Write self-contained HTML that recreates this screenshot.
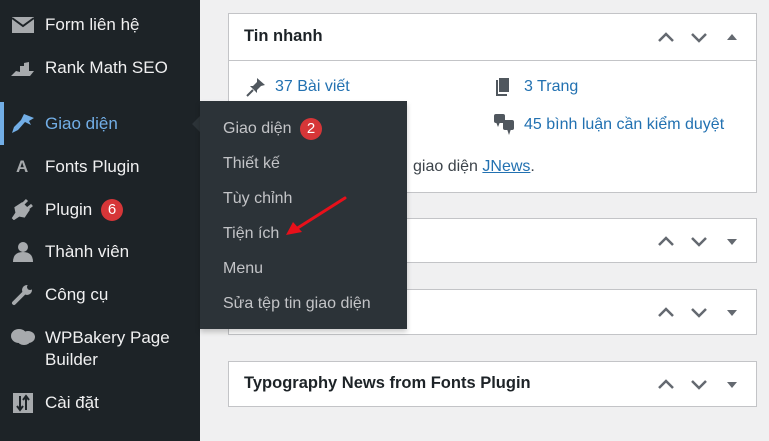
<!DOCTYPE html>
<html><head><meta charset="utf-8"><style>
*{margin:0;padding:0;box-sizing:border-box}
body{width:769px;height:441px;overflow:hidden;background:#f0f0f1;font-family:"Liberation Sans",sans-serif;position:relative}
.sb{position:absolute;left:0;top:0;width:200px;height:441px;background:#1d2327}
.it{position:absolute;left:45px;color:#f0f0f1;font-size:17px;line-height:20px;white-space:nowrap}
.ic{position:absolute;left:10px;width:26px;height:22px}
.bar{position:absolute;left:0;top:102px;width:4px;height:43px;background:#72aee6}
.badge{position:absolute;width:22px;height:22px;border-radius:11px;background:#d63638;color:#fff;font-size:15px;line-height:22px;text-align:center}
.fly{position:absolute;left:200px;top:101px;width:207px;height:228px;background:#2c3338;box-shadow:0 3px 5px rgba(0,0,0,.2)}
.fi{position:absolute;left:23px;color:#c3c4c7;font-size:16px;line-height:20px;white-space:nowrap}
.tip{position:absolute;left:192px;top:116px;width:0;height:0;border-top:8px solid transparent;border-bottom:8px solid transparent;border-right:8px solid #2c3338}
.box{position:absolute;left:228px;width:529px;background:#fff;border:1px solid #c3c4c7}
.ttl{position:absolute;left:15px;font-size:16.5px;font-weight:bold;color:#1d2327;white-space:nowrap}
.ctl{position:absolute;right:8px;width:90px;height:14px}
.lk{position:absolute;color:#2271b1;font-size:16px;line-height:20px;white-space:nowrap}
</style></head><body>
<div class="sb">
 <svg class="ic" style="top:14px" viewBox="0 0 26 22"><rect x="2" y="3" width="22" height="16" fill="#a7aaad"/><path d="M2 4 L13 12 L24 4" stroke="#1d2327" stroke-width="2" fill="none"/></svg>
 <div class="it" style="top:15px">Form liên hệ</div>
 <svg class="ic" style="top:58px" viewBox="0 0 26 22"><path d="M1 18 L6 13 L10 14 L10 8 L14 8 L14 5 L19 4 L19 13 L24 13 L20 18 Z" fill="#a7aaad"/></svg>
 <div class="it" style="top:58px">Rank Math SEO</div>
 <div class="bar"></div>
 <svg class="ic" style="top:112px" viewBox="0 0 26 22"><path d="M14 2 L24 6 L19 9 L21 13 L15 10 L8 18 L2 21 L4 15 L11 8 Z" fill="#72aee6"/></svg>
 <div class="it" style="top:114px;color:#72aee6">Giao diện</div>
 <div class="it" style="top:157px;left:16px;color:#a7aaad;font-weight:bold">A</div>
 <div class="it" style="top:157px">Fonts Plugin</div>
 <svg class="ic" style="top:198px" viewBox="0 0 26 22"><path d="M3 21 L7 15 L6 10 L12 6 L18 12 L14 18 L9 17 Z M12 7 L17 2 M17 11 L22 7" stroke="#a7aaad" stroke-width="3" fill="#a7aaad"/></svg>
 <div class="it" style="top:200px">Plugin</div>
 <div class="badge" style="left:101px;top:199px">6</div>
 <svg class="ic" style="top:240px" viewBox="0 0 26 22"><circle cx="13" cy="7" r="5" fill="#a7aaad"/><path d="M3 22 Q3 12 13 12 Q23 12 23 22 Z" fill="#a7aaad"/></svg>
 <div class="it" style="top:242px">Thành viên</div>
 <svg class="ic" style="top:284px" viewBox="0 0 26 22"><path d="M4 19 L14 9" stroke="#a7aaad" stroke-width="4" stroke-linecap="round"/><circle cx="17" cy="6" r="5" fill="#a7aaad"/><circle cx="20" cy="3" r="3" fill="#1d2327"/></svg>
 <div class="it" style="top:285px">Công cụ</div>
 <svg class="ic" style="top:326px" viewBox="0 0 26 22"><ellipse cx="9" cy="10" rx="8" ry="7" fill="#a7aaad"/><ellipse cx="18" cy="11" rx="7" ry="6" fill="#a7aaad"/><ellipse cx="14" cy="15" rx="6" ry="4" fill="#a7aaad"/></svg>
 <div class="it" style="top:328px">WPBakery Page<br><span style="line-height:23px">Builder</span></div>
 <svg class="ic" style="top:392px" viewBox="0 0 26 22"><rect x="3" y="1" width="20" height="20" fill="#a7aaad"/><path d="M10 4 V18 M7 14 L10 18 L13 14 M16 18 V4 M13 8 L16 4 L19 8" stroke="#1d2327" stroke-width="2" fill="none"/></svg>
 <div class="it" style="top:393px">Cài đặt</div>
</div>

<div class="box" style="top:13px;height:180px">
 <div class="ttl" style="top:13px">Tin nhanh</div>
 <svg class="ctl" style="top:16px" viewBox="0 0 90 14"><path d="M1 11 L8 4 L15 11" stroke="#646970" stroke-width="2.5" fill="none"/><path d="M34 4 L41 11 L48 4" stroke="#646970" stroke-width="2.5" fill="none"/><path d="M69 10 L74 4 L79 10 Z" fill="#646970"/></svg>
 <div style="position:absolute;left:0;top:46px;width:527px;border-top:1px solid #c3c4c7"></div>
 <svg style="position:absolute;left:16px;top:62px" width="22" height="22" viewBox="0 0 22 22"><path d="M12 2 L20 9 L16 10 L12 14 L12 17 L5 10 L8 10 L12 6 Z" fill="#50575e"/><path d="M8 14 L2 20" stroke="#50575e" stroke-width="2"/></svg>
 <div class="lk" style="left:46px;top:63px">37 Bài viết</div>
 <svg style="position:absolute;left:265px;top:62px" width="18" height="22" viewBox="0 0 18 22"><rect x="5" y="2" width="10" height="14" fill="#50575e"/><path d="M3 4 V19 H13" stroke="#50575e" stroke-width="2" fill="none"/></svg>
 <div class="lk" style="left:295px;top:63px">3 Trang</div>
 <svg style="position:absolute;left:264px;top:99px" width="24" height="24" viewBox="0 0 24 24"><rect x="1" y="1" width="11" height="9" rx="2" fill="#50575e"/><path d="M3 9 L5 14 L7 9Z" fill="#50575e"/><rect x="10" y="7" width="11" height="10" rx="2" fill="#50575e"/><path d="M14 16 L16 22 L18 16Z" fill="#50575e"/></svg>
 <div class="lk" style="left:295px;top:101px">45 bình luận cần kiểm duyệt</div>
 <div class="lk" style="left:184px;top:143px;color:#3c434a">giao diện <span style="color:#2271b1;text-decoration:underline">JNews</span>.</div>
</div>

<div class="box" style="top:218px;height:45px">
 <svg class="ctl" style="top:15px" viewBox="0 0 90 14"><path d="M1 11 L8 4 L15 11" stroke="#646970" stroke-width="2.5" fill="none"/><path d="M34 4 L41 11 L48 4" stroke="#646970" stroke-width="2.5" fill="none"/><path d="M69 5 L74 11 L79 5 Z" fill="#646970"/></svg>
</div>
<div class="box" style="top:289px;height:46px">
 <svg class="ctl" style="top:15px" viewBox="0 0 90 14"><path d="M1 11 L8 4 L15 11" stroke="#646970" stroke-width="2.5" fill="none"/><path d="M34 4 L41 11 L48 4" stroke="#646970" stroke-width="2.5" fill="none"/><path d="M69 5 L74 11 L79 5 Z" fill="#646970"/></svg>
</div>
<div class="box" style="top:361px;height:46px">
 <div class="ttl" style="top:12px">Typography News from Fonts Plugin</div>
 <svg class="ctl" style="top:15px" viewBox="0 0 90 14"><path d="M1 11 L8 4 L15 11" stroke="#646970" stroke-width="2.5" fill="none"/><path d="M34 4 L41 11 L48 4" stroke="#646970" stroke-width="2.5" fill="none"/><path d="M69 5 L74 11 L79 5 Z" fill="#646970"/></svg>
</div>

<div class="tip"></div>
<div class="fly">
 <div class="fi" style="top:18px">Giao diện</div>
 <div class="badge" style="left:100px;top:17px">2</div>
 <div class="fi" style="top:53px">Thiết kế</div>
 <div class="fi" style="top:88px">Tùy chỉnh</div>
 <div class="fi" style="top:123px">Tiện ích</div>
 <div class="fi" style="top:158px">Menu</div>
 <div class="fi" style="top:193px">Sửa tệp tin giao diện</div>
</div>
<svg style="position:absolute;left:280px;top:192px" width="72" height="50" viewBox="0 0 72 50"><path d="M65 6 L16 37" stroke="#e8101a" stroke-width="3" stroke-linecap="round"/><path d="M6 43 L13 30 L22 40 Z" fill="#e8101a"/></svg>
</body></html>
